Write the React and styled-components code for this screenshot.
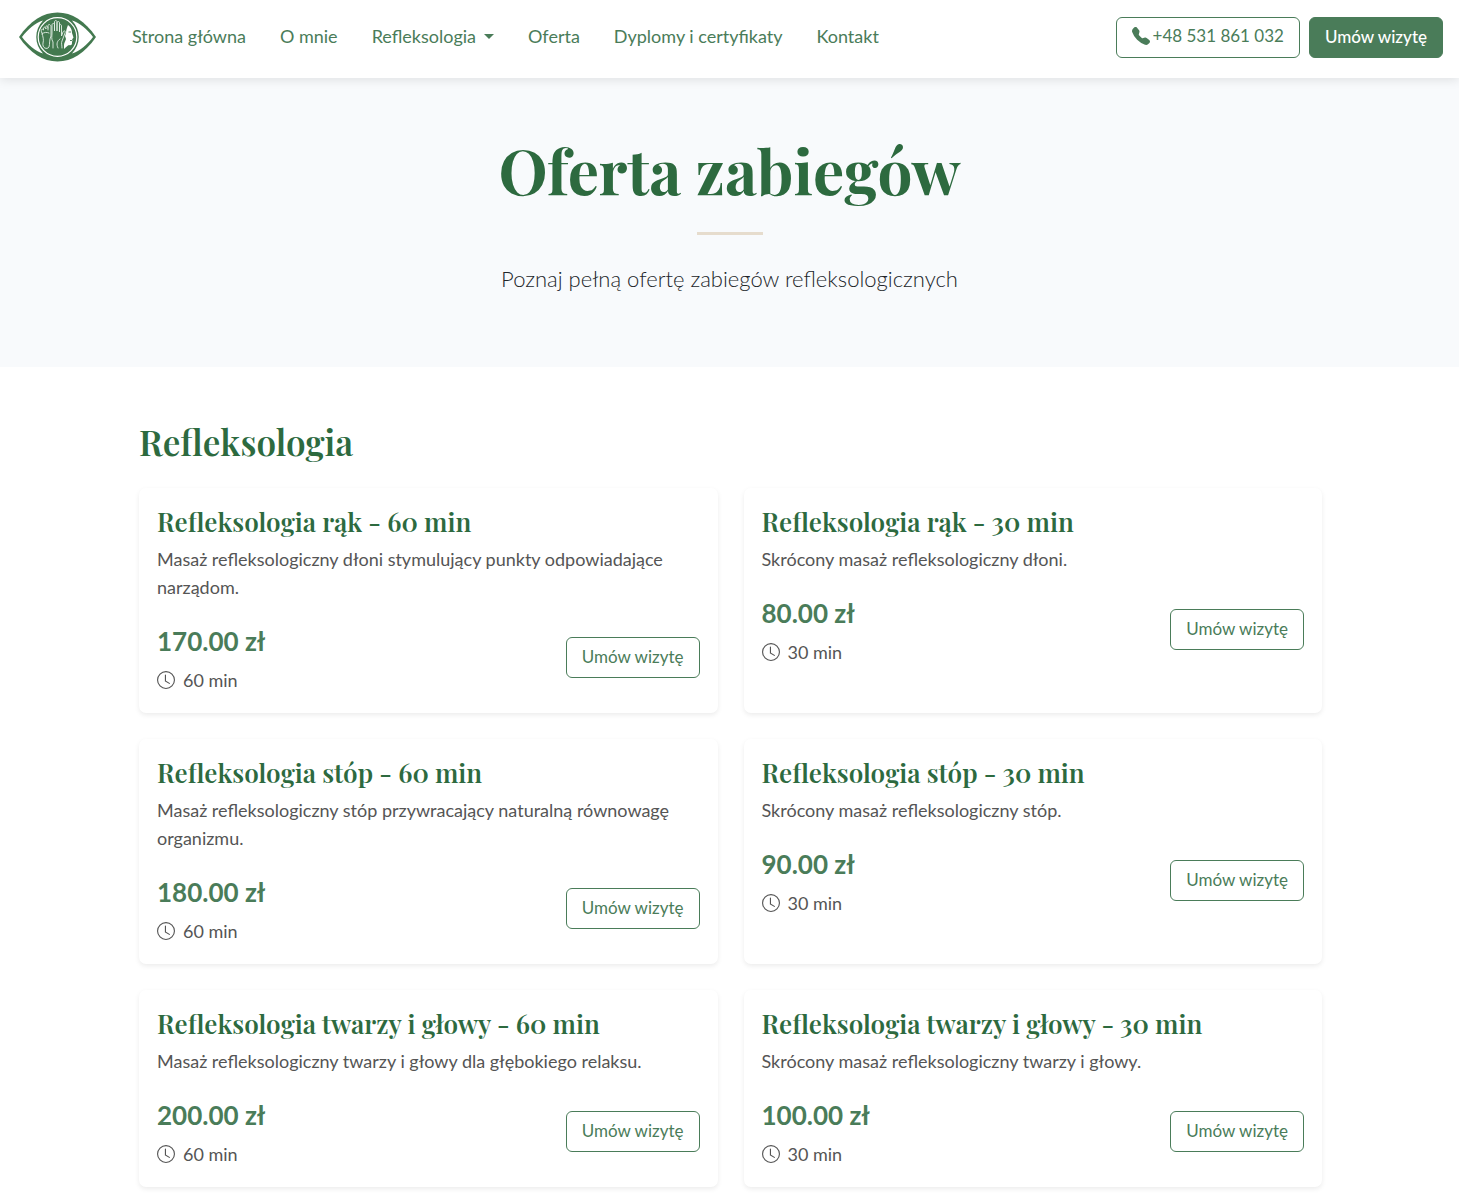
import React from "react";
import styled, { createGlobalStyle } from "styled-components";
import { BsClock, BsTelephoneFill } from "react-icons/bs";

const GREEN = "#4a7c59";
const DARK_GREEN = "#2d6a3f";

const GlobalStyle = createGlobalStyle`
  *, *::before, *::after {
    box-sizing: border-box;
  }
  body {
    margin: 0;
    background: #fff;
    color: #212529;
    font-family: Lato, "Open Sans", sans-serif;
    font-size: 18px;
    line-height: 28px;
  }
  h1, h2, h3, p, ul {
    margin: 0;
    padding: 0;
  }
`;

const Navbar = styled.header`
  display: flex;
  align-items: center;
  height: 78px;
  padding: 0 16px 4px 18px;
  position: relative;
  background: #fff;
  box-shadow: 0 2px 10px rgba(0, 0, 0, 0.1);
`;

const Brand = styled.a`
  display: flex;
  margin-right: 35px;
`;

const NavList = styled.ul`
  display: flex;
  flex: 1;
  gap: 34px;
  padding-bottom: 2px;
  list-style: none;
`;

const NavLink = styled.a`
  display: flex;
  align-items: center;
  color: ${GREEN};
  text-decoration: none;
  white-space: nowrap;
`;

const Caret = styled.span`
  margin-left: 8px;
  border-top: 5px solid ${GREEN};
  border-left: 5px solid transparent;
  border-right: 5px solid transparent;
`;

const NavActions = styled.div`
  display: flex;
  gap: 9px;
`;

const Button = styled.button`
  display: inline-flex;
  align-items: center;
  gap: 3px;
  height: 41px;
  padding: 0 15px 2px;
  border: 1px solid ${GREEN};
  border-radius: 6px;
  background: ${({ $filled }) => ($filled ? GREEN : "transparent")};
  color: ${({ $filled }) => ($filled ? "#fff" : GREEN)};
  font-family: inherit;
  font-size: 17px;
  font-weight: ${({ $filled }) => ($filled ? 500 : 400)};
  text-decoration: none;
  white-space: nowrap;
  cursor: pointer;
`;

const Hero = styled.section`
  display: flex;
  flex-direction: column;
  align-items: center;
  padding: 52px 16px 71px;
  background: #f8fafc;
  text-align: center;
`;

const HeroTitle = styled.h1`
  color: ${DARK_GREEN};
  font-family: "Playfair Display", "Liberation Serif", serif;
  font-size: 62px;
  font-weight: 700;
  line-height: 80px;
`;

const Divider = styled.div`
  width: 66px;
  height: 3px;
  margin: 22px 0 26px;
  background: #e6dccd;
`;

const Lead = styled.p`
  font-size: 22px;
  font-weight: 300;
  line-height: 35px;
`;

const Main = styled.main`
  padding: 52px 137px 53px 139px;
`;

const SectionTitle = styled.h2`
  margin-bottom: 23px;
  color: ${DARK_GREEN};
  font-family: "Playfair Display", "Liberation Serif", serif;
  font-size: 35px;
  font-weight: 600;
  line-height: 46px;
`;

const Cards = styled.div`
  display: grid;
  grid-template-columns: 1fr 1fr;
  gap: 26px;
`;

const Card = styled.article`
  padding: 18px 18px 19px;
  border-radius: 7px;
  background: #fff;
  box-shadow: 0 2px 5px rgba(0, 0, 0, 0.08);
`;

const CardTitle = styled.h3`
  margin-bottom: 7px;
  color: ${DARK_GREEN};
  font-family: "Playfair Display", "Liberation Serif", serif;
  font-size: 26px;
  font-weight: 600;
  line-height: 32px;
`;

const Description = styled.p`
  margin-bottom: 19px;
  color: #555;
`;

const CardFooter = styled.div`
  display: flex;
  align-items: center;
  justify-content: space-between;
`;

const Price = styled.div`
  margin-bottom: 4px;
  color: ${GREEN};
  font-size: 26px;
  font-weight: 700;
  line-height: 42px;
`;

const Duration = styled.div`
  display: flex;
  align-items: center;
  gap: 8px;
  color: #555;
`;

const services = [
  {
    name: "Refleksologia rąk - 60 min",
    description:
      "Masaż refleksologiczny dłoni stymulujący punkty odpowiadające narządom.",
    price: "170.00 zł",
    duration: "60 min",
  },
  {
    name: "Refleksologia rąk - 30 min",
    description: "Skrócony masaż refleksologiczny dłoni.",
    price: "80.00 zł",
    duration: "30 min",
  },
  {
    name: "Refleksologia stóp - 60 min",
    description:
      "Masaż refleksologiczny stóp przywracający naturalną równowagę organizmu.",
    price: "180.00 zł",
    duration: "60 min",
  },
  {
    name: "Refleksologia stóp - 30 min",
    description: "Skrócony masaż refleksologiczny stóp.",
    price: "90.00 zł",
    duration: "30 min",
  },
  {
    name: "Refleksologia twarzy i głowy - 60 min",
    description: "Masaż refleksologiczny twarzy i głowy dla głębokiego relaksu.",
    price: "200.00 zł",
    duration: "60 min",
  },
  {
    name: "Refleksologia twarzy i głowy - 30 min",
    description: "Skrócony masaż refleksologiczny twarzy i głowy.",
    price: "100.00 zł",
    duration: "30 min",
  },
];

const links = [
  { label: "Strona główna" },
  { label: "O mnie" },
  { label: "Refleksologia", dropdown: true },
  { label: "Oferta" },
  { label: "Dyplomy i certyfikaty" },
  { label: "Kontakt" },
];

const Logo = () => (
  <svg width="79" height="50" viewBox="0 0 79 50" fill="none" aria-hidden="true">
    <path
      d="M1 25C12 9 25 .5 39.500 .5S67 9 78 25C67 41 54 49.500 39.500 49.500S12 41 1 25Z"
      fill="#43794f"
    />
    <path
      d="M4 25C10 17 17 11 25 8.500C16 18 16 32 25 41.500C17 39 10 33 4 25ZM75 25C69 17 62 11 54 8.500C63 18 63 32 54 41.500C62 39 69 33 75 25Z"
      fill="#fff"
    />
    <circle cx="39.500" cy="25" r="20.500" fill="#43794f" />
    <circle cx="39.500" cy="25" r="19.300" stroke="#fff" strokeWidth="1.200" />
    {/* foot */}
    <g stroke="#e4eee6" strokeWidth=".9" strokeLinecap="round" strokeLinejoin="round">
      <path d="M24 21C25 25 26 28 25 31C24 36 29 38 31 35C32 32 31 28 33 24V14C32 12 30 12 30 14V18" />
      <path d="M24 21C22 18 24 16 25.500 18C25 15 27 14 28 17C27 13 29.500 13 30 16M24 22C26 20 29 20 31 21" />
      {/* hand */}
      <path d="M35 36V30C33 27 34 24 34 21V13C34 11 36.500 11 36.500 13V19V10C36.500 8 39 8 39 10V19V11C39 9 41.500 9 41.500 11V20V14C41.500 12 43.500 12 43.500 14V24L45 20C46 18 48 19 47 21L44 29C43 31 44 33 44 36" />
      <path d="M40 36C38 32 39 29 42 27" />
    </g>
    {/* face in profile */}
    <path
      d="M50 13C49 16 48 18 48 21L47 24L48 27C47 30 46 31 46 33V37C48 35 49 34 51 33C53 33.500 54 33 54 31L54 29.500L55 28.500L54 27.500L55.500 25.500L54 21C54 18 53 15 50 13Z"
      fill="#fff"
    />
    <path d="M50.500 20H53M52 28.500H54.500" stroke="#43794f" strokeWidth=".9" />
  </svg>
);

const ServiceCard = ({ name, description, price, duration }) => (
  <Card>
    <CardTitle>{name}</CardTitle>
    <Description>{description}</Description>
    <CardFooter>
      <div>
        <Price>{price}</Price>
        <Duration>
          <BsClock size={18} />
          {duration}
        </Duration>
      </div>
      <Button type="button">Umów wizytę</Button>
    </CardFooter>
  </Card>
);

const App = () => {
  return (
    <>
      <GlobalStyle />
      <Navbar>
        <Brand href="#" aria-label="Strona główna">
          <Logo />
        </Brand>
        <NavList>
          {links.map(({ label, dropdown }) => (
            <li key={label}>
              <NavLink href="#">
                {label}
                {dropdown && <Caret />}
              </NavLink>
            </li>
          ))}
        </NavList>
        <NavActions>
          <Button as="a" href="tel:+48531861032">
            <BsTelephoneFill size={18} />
            +48 531 861 032
          </Button>
          <Button type="button" $filled>
            Umów wizytę
          </Button>
        </NavActions>
      </Navbar>
      <Hero>
        <HeroTitle>Oferta zabiegów</HeroTitle>
        <Divider />
        <Lead>Poznaj pełną ofertę zabiegów refleksologicznych</Lead>
      </Hero>
      <Main>
        <SectionTitle>Refleksologia</SectionTitle>
        <Cards>
          {services.map((service) => (
            <ServiceCard key={service.name} {...service} />
          ))}
        </Cards>
      </Main>
    </>
  );
};

export default App;
